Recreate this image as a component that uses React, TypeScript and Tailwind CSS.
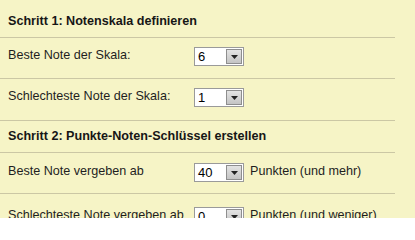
import React from "react";

type Row =
  | { kind: "head"; title: string; h: string }
  | { kind: "field"; label: string; value: string; suffix?: string; h: string; pt: string };

const rows: Row[] = [
  { kind: "head", title: "Schritt 1: Notenskala definieren", h: "h-[38px]" },
  { kind: "field", label: "Beste Note der Skala:", value: "6", h: "h-[41px]", pt: "pt-[9px]" },
  { kind: "field", label: "Schlechteste Note der Skala:", value: "1", h: "h-[42px]", pt: "pt-[9px]" },
  { kind: "head", title: "Schritt 2: Punkte-Noten-Schlüssel erstellen", h: "h-[32px]" },
  { kind: "field", label: "Beste Note vergeben ab", value: "40", suffix: "Punkten (und mehr)", h: "h-[41px]", pt: "pt-[10px]" },
  { kind: "field", label: "Schlechteste Note vergeben ab", value: "0", suffix: "Punkten (und weniger)", h: "h-[41px]", pt: "pt-[13px]" },
];

function FakeSelect({ value }: { value: string }) {
  return (
    <div className="flex h-[19px] w-[50px] shrink-0 border border-[#9a9a9a] bg-white">
      <span className="flex-1 pl-[3px] pt-[2px] text-[13px] leading-[14px] text-black">{value}</span>
      <span className="m-[1px] flex w-[16px] items-center justify-center border border-[#8e8e8e] bg-gradient-to-b from-[#e4e4e4] to-[#c4c4c4]">
        <svg width="7" height="4" viewBox="0 0 7 4">
          <path d="M0 0h7L3.5 4z" fill="#222" />
        </svg>
      </span>
    </div>
  );
}

export default function App() {
  return (
    <div className="h-[218px] w-[415px] overflow-hidden bg-[#f6f4c6] pt-[5px] font-['Liberation_Sans',Arial,sans-serif] text-[12.6px] text-[#1e1e1e]">
      <div className="w-[395px]">
        {rows.map((row, i) =>
          row.kind === "head" ? (
            <div
              key={i}
              className={`${i === 0 ? "h-[33px]" : row.h} flex items-center border-b border-[#cbc7a4] pl-[8px] font-bold text-[#161616]`}
            >
              {row.title}
            </div>
          ) : (
            <div key={i} className={`${row.h} ${row.pt} flex items-start border-b border-[#cbc7a4] pl-[8px]`}>
              <span className="w-[186px] shrink-0 pt-[1px] leading-[15px]">{row.label}</span>
              <FakeSelect value={row.value} />
              {row.suffix && <span className="pl-[6px] pt-[1px] leading-[15px]">{row.suffix}</span>}
            </div>
          )
        )}
      </div>
    </div>
  );
}
